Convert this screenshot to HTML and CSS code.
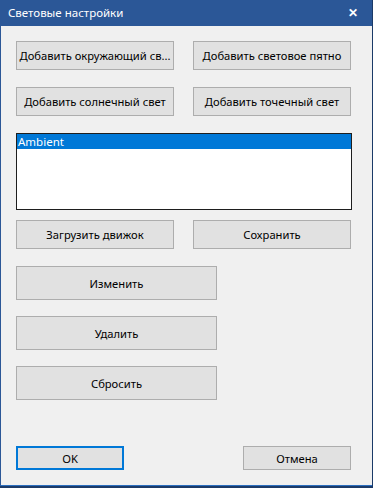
FILE: index.html
```html
<!DOCTYPE html>
<html>
<head>
    <title>Световые настройки</title>
    <meta charset="utf-8" />
    <link rel="stylesheet" href="styles.css">
</head>
<body>

    <div class="window">

        <div class="titlebar">
            <span class="title_text">Световые настройки</span>
            <span class="close_btn">&#x2715;</span>
        </div>

        <div class="content">

            <div class="row_pair">
                <button class="btn btn_half">Добавить окружающий св...</button>
                <button class="btn btn_half">Добавить световое пятно</button>
            </div>

            <div class="row_pair">
                <button class="btn btn_half">Добавить солнечный свет</button>
                <button class="btn btn_half">Добавить точечный свет</button>
            </div>

            <div class="listbox">
                <div class="list_item selected">Ambient</div>
            </div>

            <div class="row_pair row_tight">
                <button class="btn btn_half">Загрузить движок</button>
                <button class="btn btn_half">Сохранить</button>
            </div>

            <button class="btn btn_wide">Изменить</button>
            <button class="btn btn_wide">Удалить</button>
            <button class="btn btn_wide">Сбросить</button>

            <div class="row_bottom">
                <button class="btn btn_small btn_default">OK</button>
                <button class="btn btn_small">Отмена</button>
            </div>

        </div>

    </div>

</body>
</html>
```

FILE: styles.css
```css
html, body {
    margin: 0;
    padding: 0;
    background: #1b3a68;
}

.window {
    width: 372px;
    height: 486px;
    background: #f0f0f0;
    border-left: 1px solid #2b5797;
    border-bottom: 1px solid #2b6fc0;
    font-family: "Noto Sans", "Open Sans", sans-serif;
    font-size: 11.2px;
    color: #000;
    box-sizing: border-box;
}

.titlebar {
    height: 26px;
    background: #2b5797;
    color: #fff;
    display: flex;
    align-items: center;
    justify-content: space-between;
    padding: 0 14px 2px 7px;
    box-sizing: border-box;
}

.title_text {
    font-size: 11.5px;
}

.close_btn {
    font-size: 12px;
    font-weight: bold;
}

.content {
    padding: 15px 0 0 15px;
    width: 335px;
}

.btn {
    display: block;
    font-family: inherit;
    font-size: 11.2px;
    color: #000;
    background: #e1e1e1;
    border: 1px solid #adadad;
    padding: 0;
    margin: 0;
    box-sizing: border-box;
    white-space: nowrap;
    overflow: hidden;
}

.row_pair {
    display: flex;
    gap: 19px;
    margin-bottom: 17px;
}

.row_tight {
    margin-top: 10px;
}

.btn_half {
    width: 158px;
    height: 29px;
}

.listbox {
    width: 336px;
    height: 77px;
    background: #fff;
    border: 1px solid #1e1e1e;
    box-sizing: border-box;
}

.list_item {
    height: 15px;
    line-height: 15px;
    padding-left: 1px;
    font-size: 11.5px;
}

.selected {
    background: #0078d7;
    color: #fff;
}

.btn_wide {
    width: 201px;
    height: 34px;
    margin-bottom: 16px;
}

.row_bottom {
    display: flex;
    justify-content: space-between;
    margin-top: 46px;
}

.btn_small {
    width: 108px;
    height: 24px;
}

.btn_default {
    border: 2px solid #0078d7;
}
```
